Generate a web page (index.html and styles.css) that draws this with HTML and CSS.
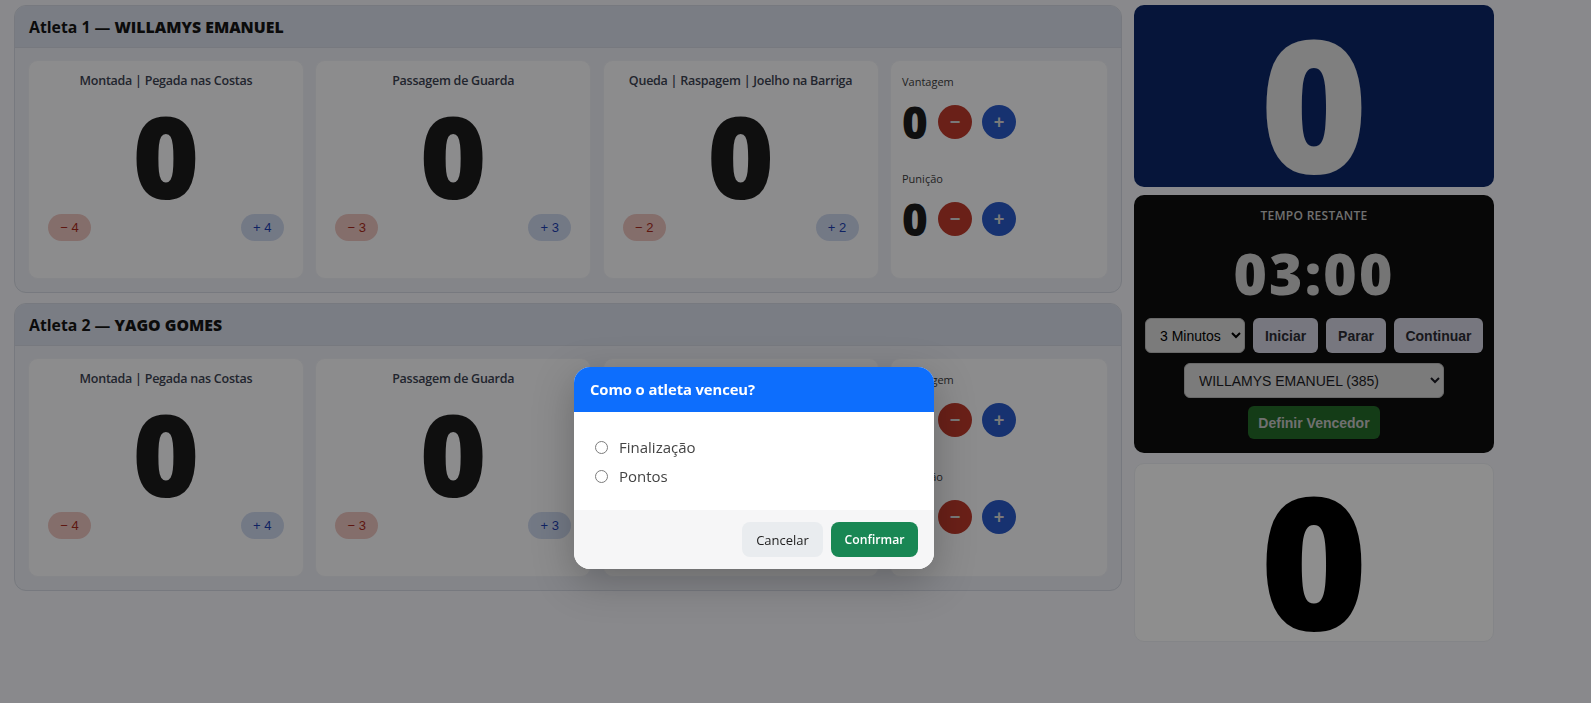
FILE: index.html
```html
<!DOCTYPE html>
<html lang="en">
<head>
    <meta charset="UTF-8">
    <meta name="viewport" content="width=device-width, initial-scale=1.0">
    <title>Placar</title>
    <link rel="stylesheet" href="styles.css">
</head>
<body>
    <div class="page">
        <div class="athletes">
            <section class="panel">
                <h2 class="panel-header">Atleta 1 — <strong>WILLAMYS EMANUEL</strong></h2>
                <div class="panel-body">
                    <div class="card score-card">
                        <h3>Montada | Pegada nas Costas</h3>
                        <div class="score">0</div>
                        <div class="pills"><button class="pill minus">− 4</button><button class="pill plus">+ 4</button></div>
                    </div>
                    <div class="card score-card">
                        <h3>Passagem de Guarda</h3>
                        <div class="score">0</div>
                        <div class="pills"><button class="pill minus">− 3</button><button class="pill plus">+ 3</button></div>
                    </div>
                    <div class="card score-card">
                        <h3>Queda | Raspagem | Joelho na Barriga</h3>
                        <div class="score">0</div>
                        <div class="pills"><button class="pill minus">− 2</button><button class="pill plus">+ 2</button></div>
                    </div>
                    <div class="card side-card">
                        <div class="side-label">Vantagem</div>
                        <div class="side-row">
                            <span class="side-score">0</span>
                            <button class="round minus-round">−</button>
                            <button class="round plus-round">+</button>
                        </div>
                        <div class="side-label second">Punição</div>
                        <div class="side-row">
                            <span class="side-score">0</span>
                            <button class="round minus-round">−</button>
                            <button class="round plus-round">+</button>
                        </div>
                    </div>
                </div>
            </section>

            <section class="panel">
                <h2 class="panel-header">Atleta 2 — <strong>YAGO GOMES</strong></h2>
                <div class="panel-body">
                    <div class="card score-card">
                        <h3>Montada | Pegada nas Costas</h3>
                        <div class="score">0</div>
                        <div class="pills"><button class="pill minus">− 4</button><button class="pill plus">+ 4</button></div>
                    </div>
                    <div class="card score-card">
                        <h3>Passagem de Guarda</h3>
                        <div class="score">0</div>
                        <div class="pills"><button class="pill minus">− 3</button><button class="pill plus">+ 3</button></div>
                    </div>
                    <div class="card score-card">
                        <h3>Queda | Raspagem | Joelho na Barriga</h3>
                        <div class="score">0</div>
                        <div class="pills"><button class="pill minus">− 2</button><button class="pill plus">+ 2</button></div>
                    </div>
                    <div class="card side-card">
                        <div class="side-label">Vantagem</div>
                        <div class="side-row">
                            <span class="side-score">0</span>
                            <button class="round minus-round">−</button>
                            <button class="round plus-round">+</button>
                        </div>
                        <div class="side-label second">Punição</div>
                        <div class="side-row">
                            <span class="side-score">0</span>
                            <button class="round minus-round">−</button>
                            <button class="round plus-round">+</button>
                        </div>
                    </div>
                </div>
            </section>
        </div>

        <aside class="scoreboard">
            <div class="big-box blue-box">0</div>
            <div class="timer-box">
                <div class="timer-label">TEMPO RESTANTE</div>
                <div class="timer">03:00</div>
                <div class="timer-controls">
                    <select class="time-select"><option>3 Minutos</option></select>
                    <button class="timer-btn iniciar">Iniciar</button>
                    <button class="timer-btn parar">Parar</button>
                    <button class="timer-btn continuar">Continuar</button>
                </div>
                <select class="winner-select"><option>WILLAMYS EMANUEL (385)</option></select>
                <button class="winner-btn">Definir Vencedor</button>
            </div>
            <div class="big-box white-box">0</div>
        </aside>
    </div>

    <div class="backdrop"></div>
    <div class="modal">
        <div class="modal-header">Como o atleta venceu?</div>
        <div class="modal-body">
            <label class="radio-row"><input type="radio" name="como"> Finalização</label>
            <label class="radio-row"><input type="radio" name="como"> Pontos</label>
        </div>
        <div class="modal-footer">
            <button class="btn-cancel">Cancelar</button>
            <button class="btn-confirm">Confirmar</button>
        </div>
    </div>
</body>
</html>
```

FILE: styles.css
```css
* {
    box-sizing: border-box;
}
body {
    margin: 0;
    height: 703px;
    overflow: hidden;
    font-family: "Open Sans", "Noto Sans", sans-serif;
    background-color: #f4f5fa;
    color: #222;
}
button {
    border: none;
    cursor: pointer;
}
.page {
    display: grid;
    grid-template-columns: 1108px 360px;
    gap: 12px;
    padding: 5px 14px;
    align-items: start;
}
.athletes {
    display: flex;
    flex-direction: column;
    gap: 10px;
}
.panel {
    background: #eceef4;
    border: 1px solid #d4d8e2;
    border-radius: 12px;
    overflow: hidden;
}
.panel-header {
    margin: 0;
    height: 42px;
    padding-left: 14px;
    line-height: 42px;
    font-size: 15.8px;
    font-weight: 700;
    color: #141414;
    background: #dadfec;
    border-bottom: 1px solid #d4d8e2;
}
.panel-header strong {
    font-weight: 800;
}
.panel-body {
    display: grid;
    grid-template-columns: 1fr 1fr 1fr 218px;
    gap: 11.5px;
    padding: 12px 13px 13px 13px;
}
.card {
    height: 219px;
    background: #fafafc;
    border-radius: 10px;
    border: 1px solid #eeeff4;
}
.score-card {
    display: flex;
    flex-direction: column;
    padding: 11px 19px 0;
    text-align: center;
}
.score-card h3 {
    margin: 0;
    font-size: 12.5px;
    line-height: 18px;
    font-weight: 600;
    letter-spacing: -0.25px;
    color: #3c4252;
}
.score {
    margin-top: 9px;
    height: 112px;
    font-size: 114px;
    line-height: 112px;
    font-weight: 800;
    color: #1c1c1c;
}
.pills {
    display: flex;
    justify-content: space-between;
    margin-top: 3px;
}
.pill {
    width: 43px;
    height: 27px;
    border-radius: 14px;
    font-family: "Liberation Sans", sans-serif;
    font-size: 13px;
    font-weight: 400;
}
.pill.minus {
    background: #ecc4bf;
    color: #a82a1c;
}
.pill.plus {
    background: #ced8ee;
    color: #1d3fb0;
}
.side-card {
    padding: 12px 11px;
}
.side-label {
    font-size: 11px;
    line-height: 18px;
    color: #3c3c3c;
}
.side-label.second {
    margin-top: 31px;
}
.side-row {
    display: flex;
    align-items: center;
    gap: 10px;
    margin-top: 14px;
    height: 34px;
}
.side-score {
    width: 26px;
    font-size: 44px;
    line-height: 34px;
    font-weight: 800;
    color: #1c1c1c;
    text-align: center;
}
.round {
    width: 34px;
    height: 34px;
    border-radius: 50%;
    font-size: 18px;
    font-weight: 700;
    color: #d8d8d8;
    padding: 0;
}
.minus-round {
    background: #bd3a2c;
}
.plus-round {
    background: #2a5ac8;
}
.scoreboard {
    display: flex;
    flex-direction: column;
    gap: 8px;
}
.big-box {
    text-align: center;
    font-size: 184px;
    font-weight: 800;
    line-height: 170px;
    border-radius: 10px;
}
.blue-box {
    height: 182px;
    padding-top: 12px;
    background: #0c2768;
    color: #e2e2e2;
}
.white-box {
    height: 179px;
    margin-top: 2px;
    padding-top: 10px;
    background: #fdfdfd;
    color: #000000;
    border: 1px solid #eceef2;
}
.timer-box {
    height: 258px;
    background: #0e0e0e;
    border-radius: 10px;
    padding-top: 12px;
    display: flex;
    flex-direction: column;
    align-items: center;
    color: #fff;
}
.timer-label {
    font-size: 12px;
    line-height: 18px;
    letter-spacing: 0.3px;
    font-weight: 600;
    color: #c8c8c8;
}
.timer {
    margin-top: 10px;
    font-size: 57px;
    line-height: 76px;
    font-weight: 800;
    letter-spacing: 2.2px;
    color: #d0d0d0;
}
.timer-controls {
    display: flex;
    gap: 8px;
    margin-top: 7px;
}
.time-select {
    width: 100px;
    height: 35px;
    padding-left: 10px;
    font-family: "Liberation Sans", sans-serif;
    font-size: 14px;
    border: 1px solid #bbb;
    border-radius: 6px;
    background: #dcdcdc;
}
.timer-btn {
    height: 35px;
    font-family: "Liberation Sans", sans-serif;
    font-size: 14px;
    font-weight: 600;
    color: #2c2c34;
    background: #d4d4e2;
    border-radius: 6px;
}
.iniciar {
    width: 65px;
}
.parar {
    width: 60px;
}
.continuar {
    width: 89px;
}
.winner-select {
    width: 260px;
    height: 35px;
    margin-top: 10px;
    padding-left: 10px;
    font-family: "Liberation Sans", sans-serif;
    font-size: 14px;
    color: #1c1c24;
    border: 1px solid #bbb;
    border-radius: 6px;
    background: #dcdcdc;
}
.winner-btn {
    width: 132px;
    height: 33px;
    margin-top: 8px;
    font-family: "Liberation Sans", sans-serif;
    font-size: 14px;
    font-weight: 700;
    color: #c8c8c8;
    background: #246c2a;
    border-radius: 6px;
}
.backdrop {
    position: fixed;
    inset: 0;
    background: rgba(0, 0, 0, 0.44);
    backdrop-filter: blur(0.5px);
}
.modal {
    position: absolute;
    left: 574px;
    top: 367px;
    width: 360px;
    height: 202px;
    background: #fff;
    border-radius: 16px;
    overflow: hidden;
    box-shadow: 0 12px 40px rgba(0, 0, 0, 0.25);
    display: flex;
    flex-direction: column;
}
.modal-header {
    height: 45px;
    padding-left: 16px;
    line-height: 44px;
    font-size: 14.8px;
    font-weight: 700;
    letter-spacing: -0.1px;
    color: #fff;
    background: #0d6efd;
}
.modal-body {
    flex: 1;
    padding: 20px 16px 0 21px;
}
.radio-row {
    display: flex;
    align-items: center;
    gap: 11px;
    height: 29px;
    font-size: 15px;
    color: #444;
}
.radio-row input {
    appearance: none;
    margin: 1px 0 0;
    width: 13px;
    height: 13px;
    border: 1px solid #7c7c7c;
    border-radius: 50%;
    background: #fff;
}
.modal-footer {
    height: 59px;
    padding: 12px 16px;
    display: flex;
    justify-content: flex-end;
    gap: 8px;
    background: #f6f6f7;
}
.btn-cancel, .btn-confirm {
    height: 35px;
    border-radius: 8px;
    font-family: "Open Sans", sans-serif;
    font-size: 13px;
}
.btn-cancel {
    width: 81px;
    background: #e9ecef;
    color: #222;
}
.btn-confirm {
    width: 87px;
    font-size: 12.2px;
    background: #198754;
    color: #fff;
    font-weight: 600;
}
```
